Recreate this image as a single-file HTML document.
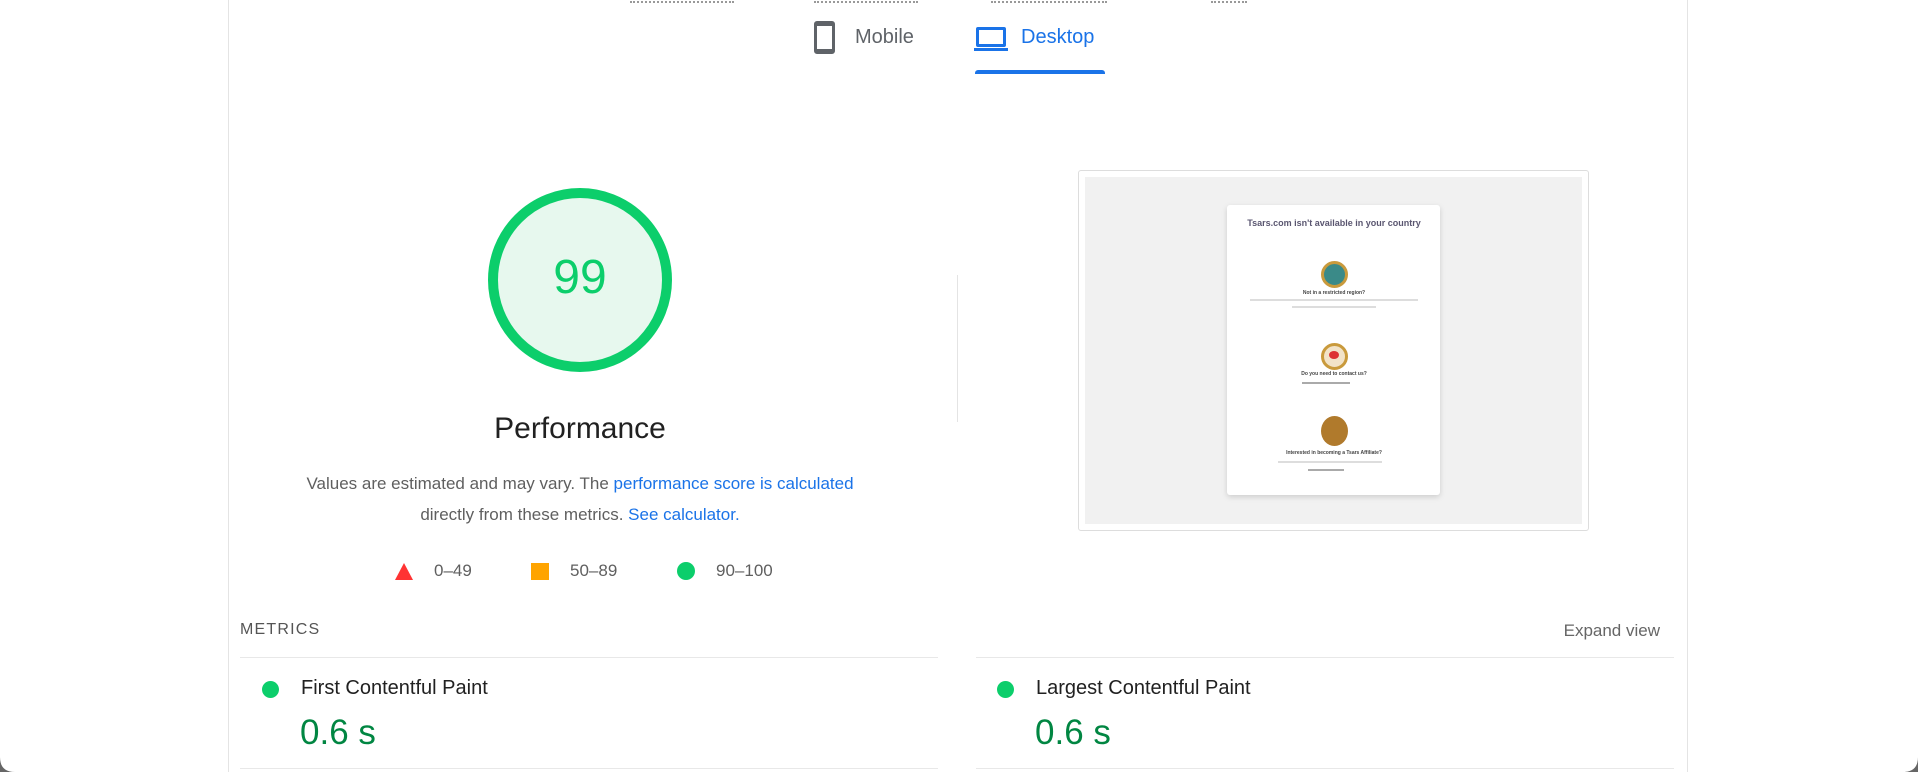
<!DOCTYPE html>
<html><head><meta charset="utf-8"><style>
*{margin:0;padding:0;box-sizing:border-box}
body{width:1918px;height:772px;background:#fff;position:relative;overflow:hidden;font-family:"Liberation Sans",sans-serif;color:#212121}
.a{position:absolute;white-space:nowrap}
.vl{position:absolute;width:1px;background:#e4e4e4}
.hl{position:absolute;height:1px;background:#e8e8e8}
.c{transform:translateX(-50%)}
a{color:#1a73e8;text-decoration:none}
</style></head><body>
<div class="a" style="left:630px;top:0;width:104px;height:3px;border-bottom:2px dotted #999"></div>
<div class="a" style="left:814px;top:0;width:104px;height:3px;border-bottom:2px dotted #999"></div>
<div class="a" style="left:991px;top:0;width:116px;height:3px;border-bottom:2px dotted #999"></div>
<div class="a" style="left:1211px;top:0;width:36px;height:3px;border-bottom:2px dotted #999"></div>

<div class="a" style="left:814px;top:21px;width:21px;height:33px;border:3px solid #5f6368;border-radius:3px;border-top-width:5px;border-bottom-width:5px"></div>
<div class="a" style="left:855px;top:26px;font-size:20px;color:#5f6368">Mobile</div>
<div class="a" style="left:976px;top:27px;width:30px;height:20px;border:3px solid #1a73e8;border-radius:2px"></div>
<div class="a" style="left:974px;top:48px;width:34px;height:3px;background:#1a73e8"></div>
<div class="a" style="left:1021px;top:26px;font-size:20px;color:#1a73e8">Desktop</div>
<div class="a" style="left:975px;top:70px;width:130px;height:4px;background:#1a73e8;border-radius:3px 3px 0 0"></div>

<div class="vl" style="left:228px;top:0;height:772px"></div>
<div class="vl" style="left:1687px;top:0;height:772px"></div>

<div class="a" style="left:488px;top:188px;width:184px;height:184px;border-radius:50%;border:10px solid #0cce6b;background:#e7f8ee"></div>
<div class="a c" style="left:580px;top:250px;font-size:48px;color:#0cce6b">99</div>
<div class="a c" style="left:580px;top:412px;font-size:30px;color:#212121">Performance</div>
<div class="a c" style="left:580px;top:474px;font-size:17px;color:#5f5f5f">Values are estimated and may vary. The <a>performance score is calculated</a></div>
<div class="a c" style="left:580px;top:505px;font-size:17px;color:#5f5f5f">directly from these metrics. <a>See calculator.</a></div>
<div class="a" style="left:395px;top:563px;width:0;height:0;border-left:9px solid transparent;border-right:9px solid transparent;border-bottom:17px solid #f33"></div>
<div class="a" style="left:434px;top:561px;font-size:17px;color:#5f5f5f">0–49</div>
<div class="a" style="left:531px;top:563px;width:18px;height:17px;background:#ffa400"></div>
<div class="a" style="left:570px;top:561px;font-size:17px;color:#5f5f5f">50–89</div>
<div class="a" style="left:677px;top:562px;width:18px;height:18px;border-radius:50%;background:#0cce6b"></div>
<div class="a" style="left:716px;top:561px;font-size:17px;color:#5f5f5f">90–100</div>

<div class="vl" style="left:957px;top:275px;height:147px"></div>

<div class="a" style="left:1078px;top:170px;width:511px;height:361px;border:1px solid #ddd;border-radius:3px"></div>
<div class="a" style="left:1085px;top:177px;width:497px;height:347px;background:#f1f1f1"></div>
<div class="a" style="left:1227px;top:205px;width:213px;height:290px;background:#fff;border-radius:3px;box-shadow:0 2px 6px rgba(0,0,0,.15)"></div>
<div class="a c" style="left:1334px;top:218px;font-size:9px;font-weight:bold;color:#5a5670">Tsars.com isn't available in your country</div>
<div class="a" style="left:1321px;top:261px;width:27px;height:27px;border-radius:50%;background:#3a8a88;border:3px solid #c99a3c"></div>
<div class="a c" style="left:1334px;top:290px;font-size:5px;font-weight:bold;color:#444">Not in a restricted region?</div>
<div class="a" style="left:1250px;top:299px;width:168px;height:2px;background:#ddd"></div>
<div class="a" style="left:1292px;top:306px;width:84px;height:2px;background:#ddd"></div>
<div class="a" style="left:1321px;top:343px;width:27px;height:27px;border-radius:50%;background:#f2e3c8;border:3px solid #c99a3c"></div>
<div class="a" style="left:1329px;top:351px;width:10px;height:8px;background:#d33;border-radius:50%"></div>
<div class="a c" style="left:1334px;top:371px;font-size:5px;font-weight:bold;color:#444">Do you need to contact us?</div>
<div class="a" style="left:1302px;top:382px;width:48px;height:2px;background:#aaa"></div>
<div class="a" style="left:1321px;top:416px;width:27px;height:30px;border-radius:50%;background:#b07a2c"></div>
<div class="a c" style="left:1334px;top:450px;font-size:5px;font-weight:bold;color:#444">Interested in becoming a Tsars Affiliate?</div>
<div class="a" style="left:1278px;top:461px;width:104px;height:2px;background:#ddd"></div>
<div class="a" style="left:1308px;top:469px;width:36px;height:2px;background:#aaa"></div>

<div class="a" style="left:240px;top:621px;font-size:16px;letter-spacing:1.2px;color:#555">METRICS</div>
<div class="a" style="right:258px;top:621px;font-size:17px;color:#666">Expand view</div>
<div class="hl" style="left:240px;top:657px;width:698px"></div>
<div class="hl" style="left:976px;top:657px;width:698px"></div>
<div class="a" style="left:262px;top:681px;width:17px;height:17px;border-radius:50%;background:#0cce6b"></div>
<div class="a" style="left:301px;top:677px;font-size:20px;color:#212121">First Contentful Paint</div>
<div class="a" style="left:300px;top:713px;font-size:35px;color:#018642">0.6 s</div>
<div class="a" style="left:997px;top:681px;width:17px;height:17px;border-radius:50%;background:#0cce6b"></div>
<div class="a" style="left:1036px;top:677px;font-size:20px;color:#212121">Largest Contentful Paint</div>
<div class="a" style="left:1035px;top:713px;font-size:35px;color:#018642">0.6 s</div>
<div class="hl" style="left:240px;top:768px;width:698px"></div>
<div class="hl" style="left:976px;top:768px;width:698px"></div>
<div class="a" style="left:0;top:757px;width:15px;height:15px;background:#666;clip-path:path('M0 0 Q0 15 15 15 L0 15Z')"></div>
<div class="a" style="right:0;top:757px;width:15px;height:15px;background:#666;clip-path:path('M15 0 Q15 15 0 15 L15 15Z')"></div>
</body></html>
